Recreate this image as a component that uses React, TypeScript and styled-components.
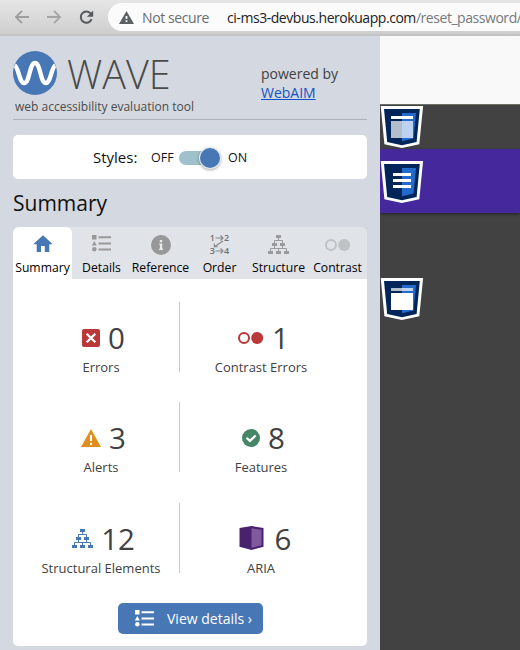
import React from 'react';
import styled, { createGlobalStyle } from 'styled-components';

const Global = createGlobalStyle`
  * { box-sizing: border-box; }
  body { margin: 0; font-family: "Open Sans", "Noto Sans", sans-serif; background: #424242; }
  svg { display: block; flex: none; overflow: visible; }
`;

const Window = styled.div`
  width: 520px; height: 650px; overflow: hidden;
  display: flex; flex-direction: column;
`;

/* Browser toolbar */
const Toolbar = styled.header`
  height: 36px; flex: none; display: flex; align-items: flex-start;
  background: linear-gradient(#e6e6e6, #cecece 34px, #b9b9b9 35px, #cecece 36px);
`;
const NavButtons = styled.div`
  width: 108px; height: 34px; flex: none; display: flex; align-items: center; padding-left: 15px; gap: 18px;
`;
const AddressBar = styled.div`
  height: 28px; width: 412px; margin-top: 3px; padding-left: 11px; flex: none;
  display: flex; align-items: center; overflow: hidden; white-space: nowrap;
  background: #fbfbfb; border-radius: 14px 0 0 14px; font-size: 14px;
`;
const Security = styled.span`
  width: 67px; margin-left: 8px; color: #6a6d71; letter-spacing: -0.4px;
`;
const AddressDivider = styled.i`
  width: 1px; height: 16px; margin: 0 9px 0 8px; background: #9b9ea2;
`;
const Url = styled.span`
  margin-left: 1px; color: #202124; letter-spacing: -0.45px;
  span { color: #76797d; }
`;

const Content = styled.div`flex: 1; min-height: 0; display: flex;`;

/* WAVE sidebar */
const Sidebar = styled.aside`
  width: 380px; flex: none; padding: 0 13px; background: #d4d8e0;
`;
const Brand = styled.div`
  height: 84px; display: flex; border-bottom: 1px solid #adb1b6;
`;
const BrandMain = styled.div`width: 248px; padding-top: 15px;`;
const LogoRow = styled.div`display: flex; height: 44px; align-items: center;`;
const Wordmark = styled.span`
  margin: 2px 0 0 10px; font-size: 39.5px; line-height: 40px; font-weight: 300; color: #4b4b4b;
`;
const Tagline = styled.div`
  margin: 3px 0 0 2px; font-size: 12px; line-height: 17px; color: #4b4b4b; white-space: nowrap;
`;
const Powered = styled.div`
  padding-top: 28px; font-size: 14px; line-height: 19px; color: #3f3f3f; white-space: nowrap;
  a { display: block; color: #1453c4; text-decoration: underline; }
`;
const StylesBox = styled.div`
  height: 44px; margin-top: 15px; padding-left: 80px; border-radius: 5px; background: #fff;
  display: flex; align-items: center; color: #111; white-space: nowrap;
`;
const StylesLabel = styled.span`width: 58px; font-size: 15px;`;
const SwitchLabel = styled.span<{ $w: number }>`width: ${p => p.$w}px; font-size: 12.5px;`;
const Track = styled.div`
  width: 39px; height: 14px; border-radius: 7px; background: #9fc1cb; margin: 2px 10px 0 0;
  display: flex; align-items: center; justify-content: flex-end;
`;
const Knob = styled.i`
  width: 20px; height: 20px; margin-right: -2px; border-radius: 50%; background: #4877b6; flex: none;
  box-shadow: 0 0 0 1px #e7edf2, 0 1px 3px 1px rgba(0,0,0,.35);
`;
const Heading = styled.h1`
  margin: 9px 0 0; height: 39px; font-size: 21px; line-height: 30px; font-weight: 400; color: #111;
`;
const Tabs = styled.nav`
  height: 52px; display: grid; grid-template-columns: repeat(6, 59px);
  background: #e0e3e8; border-radius: 6px 6px 0 0;
`;
const Tab = styled.div<{ $active?: boolean }>`
  display: flex; flex-direction: column; align-items: center; padding-top: 6px; white-space: nowrap;
  background: ${p => (p.$active ? '#fff' : 'transparent')}; border-radius: 6px 6px 0 0;
  color: #000; font-size: 12.2px; line-height: 18px;
`;
const TabIcon = styled.div`height: 26px; display: flex; align-items: flex-start; justify-content: center;`;
const IconDrop = styled.div<{ $top: number }>`padding-top: ${p => p.$top}px;`;

const Panel = styled.main`
  height: 367px; background: #fff; border-radius: 0 0 5px 5px; padding: 23px 0 0 8px;
  display: flex; flex-direction: column;
`;
const Stats = styled.section`
  display: grid; grid-template-columns: 159px 161px; grid-template-rows: 70px 70px 70px; row-gap: 30.4px;
`;
const Stat = styled.div<{ $divider?: boolean }>`
  border-right: ${p => (p.$divider ? '1px solid #c9c9c9' : '0')};
  padding-left: ${p => (p.$divider ? 2 : 1)}px;
  display: flex; flex-direction: column; align-items: center; color: #414141;
`;
const Figure = styled.div`
  display: flex; align-items: center; gap: 8px; height: 36px; margin-top: 18px; padding-left: 5px;
  font-size: 29.5px; line-height: 36px;
`;
const Caption = styled.div`font-size: 13px; line-height: 18px; margin-top: 2px; white-space: nowrap;`;
const DetailsButton = styled.button`
  width: 145px; height: 31px; margin: 30px 0 0 97px; padding: 0 0 0 17px; border: 0; border-radius: 5px;
  background: #4877b6; color: #fff; font: 14px "Open Sans", sans-serif; white-space: nowrap;
  display: flex; align-items: center; gap: 13px;
`;

/* Evaluated page */
const Page = styled.div`flex: 1; display: flex; flex-direction: column; overflow: hidden; background: #424242;`;
const PageHeader = styled.div`height: 69px; background: #f9f9f9; border-bottom: 1px solid #6b7066;`;
const PageBand = styled.div<{ $h: number; $top: number; $bg: string; $shadow?: boolean }>`
  height: ${p => p.$h}px; padding-top: ${p => p.$top}px; background: ${p => p.$bg};
  box-shadow: ${p => (p.$shadow ? '0 1px 3px rgba(0,0,0,.5)' : 'none')};
`;

const ArrowIcon = ({ flip = false }: { flip?: boolean }) => (
  <svg width="14" height="14" viewBox="0 0 14 14" fill="none" stroke={flip ? '#a5a5a5' : '#9d9d9d'} strokeWidth="1.8">
    <path d={flip ? 'M0 7h13M7 .8 13.1 7 7 13.2' : 'M14 7H1M7 .8.9 7 7 13.2'} />
  </svg>
);
const ReloadIcon = () => (
  <svg width="15" height="15" viewBox="0 0 15 15">
    <path d="M12.6 9.2A5.6 5.6 0 1 1 11.8 3.7" fill="none" stroke="#56595d" strokeWidth="2" />
    <path d="M14.2.4v6.3H7.9z" fill="#56595d" />
  </svg>
);
const NotSecureIcon = () => (
  <svg width="15" height="13" viewBox="0 0 15 13">
    <path d="M7.5 0 15 13H0z" fill="#5d6064" />
    <path d="M6.6 5h1.8v3H6.6zM6.6 9.2h1.8V11H6.6z" fill="#fff" />
  </svg>
);
const WaveLogo = () => (
  <svg width="44" height="44" viewBox="0 0 44 44">
    <circle cx="22" cy="22" r="22" fill="#4877b6" />
    <path d="M1.8 14.5C5.5 16 6.2 32 11.2 32C16.8 32 16.4 12 22 12S27.2 32 32.8 32C37.8 32 38.5 16 42.2 14.5" fill="none" stroke="#fff" strokeWidth="4.4" />
  </svg>
);
const HomeIcon = () => (
  <svg width="20" height="22" viewBox="0 0 20 22">
    <path d="M10 2.2 19.8 11.3H16.3V19H11.8V13H8V19H3.7V11.3H.2z" fill="#4877b6" />
  </svg>
);
const ListIcon = ({ color = '#999' }: { color?: string }) => (
  <svg width="19" height="17" viewBox="0 0 19 17" fill={color}>
    <path d="M0 0h4.5v4.5H0zM2.3 6 4.8 10.5H-.2z" />
    <circle cx="2.3" cy="14.2" r="2.2" />
    <path d="M6.5 1.2H19v2H6.5zM6.5 7.5H19v2H6.5zM6.5 13.4H19v2H6.5z" />
  </svg>
);
const InfoIcon = () => (
  <svg width="20" height="20" viewBox="0 0 20 20">
    <circle cx="10" cy="10" r="10" fill="#969899" />
    <path d="M8.8 5h2.4v2.2H8.8zM8.2 8.5h3v5.2h.9V15H8v-1.3h.9V9.8h-.7z" fill="#e8eaed" />
  </svg>
);
const OrderIcon = () => (
  <svg width="20" height="22" viewBox="0 0 20 22" fontFamily="Open Sans, sans-serif" fontSize="9" fontWeight="600" fill="#707273">
    <text x="-.3" y="8.2">1</text><text x="14" y="8.2">2</text>
    <text x="-.2" y="21">3</text><text x="14" y="21">4</text>
    <path d="M5.5 5H13M10.5 2.5 13 5l-2.5 2.5M5.5 18H13m-2.5-2.5L13 18l-2.5 2.5M13 8 4.3 13.7M7.8 13.7H4.3V10.4" fill="none" stroke="#858788" strokeWidth="1.1" />
  </svg>
);
const TreeIcon = ({ color }: { color: string }) => (
  <svg width="21" height="20" viewBox="0 0 21 20">
    <path d="M8 0h5v3H8zM4 8h5v3H4zM12 8h5v3h-5zM0 16h5v3H0zM8 16h5v3H8zM16 16h5v3h-5z" fill={color} />
    <path d="M10.5 3v2.5M6.5 8V5.5h8V8M6.5 11v2.5M14.5 11v2.5M2.5 16v-2.5h16V16M10.5 13.5V16" fill="none" stroke={color} />
  </svg>
);
const ContrastIcon = ({ color }: { color: string }) => (
  <svg width="26" height="12" viewBox="0 0 26 12">
    <circle cx="6" cy="6" r="5" fill="none" stroke={color} strokeWidth="2" />
    <circle cx="19.2" cy="6" r="6" fill={color} />
  </svg>
);
const ErrorIcon = () => (
  <svg width="18" height="18" viewBox="0 0 18 18">
    <rect width="18" height="18" rx="2" fill="#bb3738" />
    <path d="m4.7 4.7 8.6 8.6m0-8.6-8.6 8.6" stroke="#fff" strokeWidth="2.3" />
  </svg>
);
const AlertIcon = () => (
  <svg width="20" height="18" viewBox="0 0 20 18">
    <path d="M10 0 20 18H0z" fill="#e18f1c" />
    <path d="M9 6h2v6H9zM9 13.8h2V16H9z" fill="#fff" />
  </svg>
);
const FeatureIcon = () => (
  <svg width="18" height="18" viewBox="0 0 18 18">
    <circle cx="9" cy="9" r="9" fill="#468566" />
    <path d="m4.5 8.7 3.4 3.2 5.8-5.4" fill="none" stroke="#fff" strokeWidth="2.2" />
  </svg>
);
const AriaIcon = () => (
  <svg width="31" height="26" viewBox="-3.5 0 31 26">
    <path d="M0 2 12 0l12 2v18.8L12 24 0 20.8z" fill="#48226e" />
    <path d="M12 2.3 22 3.7v15.6L12 21.8z" fill="#80599f" />
  </svg>
);

type BadgeKind = 'header' | 'nav' | 'main';
const StructureBadge = ({ kind }: { kind: BadgeKind }) => (
  <svg width="43" height="42" viewBox="0 0 43 42">
    <path d="M.7 0h42.4L39.3 38.2 21.9 42 4.4 38.2z" fill="#fff" />
    <path d="M4 3h35.8l-3.2 32.9-14.7 3.3L7.2 35.9z" fill="#002659" />
    <path d="M22 7h14l-2.5 25.5L22 35.2z" fill="#236acd" />
    {kind === 'header' && <><path d="M11 10h22v3H11z" fill="#fff" /><path d="M11 15h22v17H11z" fill="#fff" fillOpacity=".7" /></>}
    {kind === 'nav' && <path d="M13 12h18v3H13zM13 18h18v3H13zM13 24h18v3H13z" fill="#fff" />}
    {kind === 'main' && <><path d="M11 10h22v3H11z" fill="#fff" fillOpacity=".7" /><path d="M11 15h22v17H11z" fill="#fff" /></>}
  </svg>
);

const tabs = [
  { label: 'Summary', icon: <HomeIcon />, top: 0 },
  { label: 'Details', icon: <ListIcon />, top: 2 },
  { label: 'Reference', icon: <InfoIcon />, top: 2 },
  { label: 'Order', icon: <OrderIcon />, top: 0 },
  { label: 'Structure', icon: <TreeIcon color="#999b9d" />, top: 2 },
  { label: 'Contrast', icon: <ContrastIcon color="#bfc2c5" />, top: 6 },
];

const stats = [
  { label: 'Errors', value: 0, icon: <ErrorIcon /> },
  { label: 'Contrast Errors', value: 1, icon: <ContrastIcon color="#bb3738" /> },
  { label: 'Alerts', value: 3, icon: <AlertIcon /> },
  { label: 'Features', value: 8, icon: <FeatureIcon /> },
  { label: 'Structural Elements', value: 12, icon: <TreeIcon color="#4877b6" /> },
  { label: 'ARIA', value: 6, icon: <AriaIcon /> },
];

export default function App() {
  return (
    <Window>
      <Global />
      <Toolbar>
        <NavButtons><ArrowIcon /><ArrowIcon flip /><ReloadIcon /></NavButtons>
        <AddressBar>
          <NotSecureIcon />
          <Security>Not secure</Security>
          <AddressDivider />
          <Url>ci-ms3-devbus.herokuapp.com<span>/reset_password/</span></Url>
        </AddressBar>
      </Toolbar>
      <Content>
        <Sidebar>
          <Brand>
            <BrandMain>
              <LogoRow><WaveLogo /><Wordmark>WAVE</Wordmark></LogoRow>
              <Tagline>web accessibility evaluation tool</Tagline>
            </BrandMain>
            <Powered>powered by<a>WebAIM</a></Powered>
          </Brand>
          <StylesBox>
            <StylesLabel>Styles:</StylesLabel>
            <SwitchLabel $w={28}>OFF</SwitchLabel>
            <Track><Knob /></Track>
            <SwitchLabel $w={30}>ON</SwitchLabel>
          </StylesBox>
          <Heading>Summary</Heading>
          <Tabs>
            {tabs.map((t, i) => (
              <Tab key={t.label} $active={i === 0}>
                <TabIcon><IconDrop $top={t.top}>{t.icon}</IconDrop></TabIcon>
                {t.label}
              </Tab>
            ))}
          </Tabs>
          <Panel>
            <Stats>
              {stats.map((s, i) => (
                <Stat key={s.label} $divider={i % 2 === 0}>
                  <Figure>{s.icon}{s.value}</Figure>
                  <Caption>{s.label}</Caption>
                </Stat>
              ))}
            </Stats>
            <DetailsButton><ListIcon color="#fff" />View details ›</DetailsButton>
          </Panel>
        </Sidebar>
        <Page>
          <PageHeader />
          <PageBand $h={44} $top={1} $bg="#424242"><StructureBadge kind="header" /></PageBand>
          <PageBand $h={64} $top={12} $bg="#46289d" $shadow><StructureBadge kind="nav" /></PageBand>
          <PageBand $h={437} $top={65} $bg="transparent"><StructureBadge kind="main" /></PageBand>
        </Page>
      </Content>
    </Window>
  );
}
